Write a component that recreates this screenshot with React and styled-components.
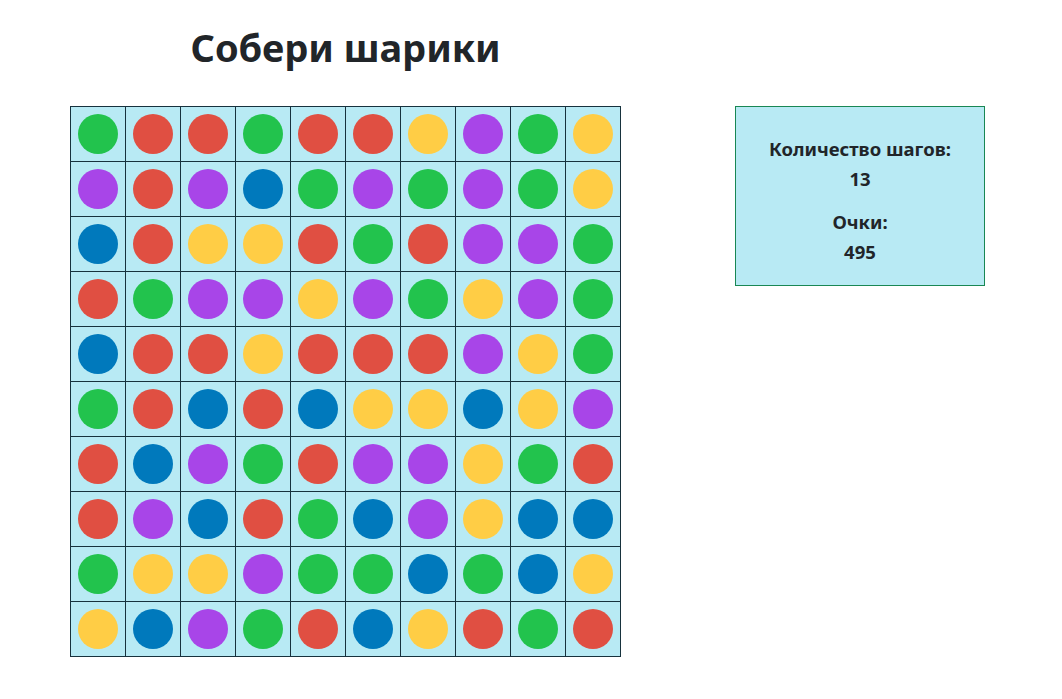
import styled, { createGlobalStyle } from "styled-components";

const GlobalStyle = createGlobalStyle`
  body {
    margin: 0;
    background: #fff;
    color: #212529;
    font-family: "Noto Sans", "Open Sans", sans-serif;
  }
`;

const COLORS = {
  G: "#22c34d",
  R: "#e04f42",
  P: "#a845e8",
  B: "#0079bc",
  Y: "#ffcd45",
};

const BOARD = [
  "GRRGRRYPGY",
  "PRPBGPGPGY",
  "BRYYRGRPPG",
  "RGPPYPGYPG",
  "BRRYRRRPYG",
  "GRBRBYYBYP",
  "RBPGRPPYGR",
  "RPBRGBPYBB",
  "GYYPGGBGBY",
  "YBPGRBYRGR",
];

const Page = styled.div`
  display: grid;
  grid-template-columns: 551px 250px;
  grid-template-rows: auto auto;
  column-gap: 114px;
  padding: 24px 0 0 70px;
`;

const Title = styled.h1`
  grid-column: 1;
  margin: 0 0 36px;
  font-size: 38px;
  line-height: 46px;
  font-weight: 700;
  text-align: center;
  letter-spacing: -0.1px;
`;

const Board = styled.div`
  grid-column: 1;
  grid-row: 2;
  display: grid;
  grid-template-columns: repeat(10, 54px);
  grid-auto-rows: 54px;
  gap: 1px;
  padding: 1px;
  background: #17323d;
  width: max-content;
`;

const Cell = styled.div`
  background: #b8eaf4;
  display: flex;
  align-items: center;
  justify-content: center;
`;

const Ball = styled.div`
  width: 40px;
  height: 40px;
  border-radius: 50%;
  background: ${(p) => p.color};
`;

const Panel = styled.div`
  grid-column: 2;
  grid-row: 2;
  align-self: start;
  box-sizing: border-box;
  height: 180px;
  background: #b8eaf4;
  border: 1px solid #198754;
  padding: 28px 10px 0;
  display: flex;
  flex-direction: column;
  align-items: center;
  gap: 16px;
`;

const Stat = styled.div`
  display: flex;
  flex-direction: column;
  align-items: center;
  gap: 3px;
  font-size: 18.5px;
  line-height: 27px;
  font-weight: 700;
`;

const App = () => {
  return (
    <>
      <GlobalStyle />
      <Page>
        <Title>Собери шарики</Title>
        <Board>
          {BOARD.map((row, r) =>
            row.split("").map((c, i) => (
              <Cell key={r + "-" + i}>
                <Ball color={COLORS[c]} />
              </Cell>
            ))
          )}
        </Board>
        <Panel>
          <Stat>
            <span>Количество шагов:</span>
            <span>13</span>
          </Stat>
          <Stat>
            <span>Очки:</span>
            <span>495</span>
          </Stat>
        </Panel>
      </Page>
    </>
  );
};

export default App;
